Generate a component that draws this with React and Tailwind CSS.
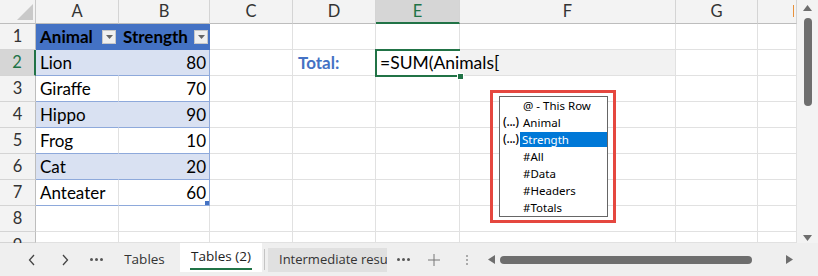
import React from "react";

const colW = ["w-[83px]", "w-[91px]", "w-[83px]", "w-[83px]", "w-[84px]", "w-[216px]", "w-[82px]", "w-[39px]"];
const letters = ["A", "B", "C", "D", "E", "F", "G", "H"];

const data = [
  ["Lion", "80"],
  ["Giraffe", "70"],
  ["Hippo", "90"],
  ["Frog", "10"],
  ["Cat", "20"],
  ["Anteater", "60"],
];

function HeaderRow() {
  return (
    <div className="flex h-[24px]">
      <div className="relative w-[36px] shrink-0 bg-[#f3f3f3] border-r border-b border-r-[#c8c8c8] border-b-[#bdbdbd]">
        <svg className="absolute left-[17px] top-[4px]" width="16" height="16">
          <polygon points="16,0 16,16 0,16" fill="#c9c9c9" />
        </svg>
      </div>
      {letters.map((l, i) => (
        <div
          key={l}
          className={
            colW[i] +
            " relative shrink-0 text-center text-[16.5px] leading-[23px] border-r border-r-[#d4d4d4] " +
            (l === "E"
              ? "bg-[#d6d6d6] text-[#217346] border-b-2 border-b-[#217346]"
              : "bg-[#f3f3f3] text-[#333333] border-b border-b-[#bdbdbd]")
          }
        >
          {l === "H" ? "" : l}
          {l === "H" && <div className="absolute right-[2px] top-[5px] w-px h-[12px] bg-[#e8913a]" />}
        </div>
      ))}
    </div>
  );
}

function RowHead({ n, active, short }) {
  return (
    <div
      className={
        "w-[36px] shrink-0 text-center text-[16.5px] border-b border-b-[#d4d4d4] " +
        (short ? "leading-[26px] " : "leading-[25px] ") +
        (active
          ? "bg-[#d6d6d6] text-[#217346] border-r-2 border-r-[#217346]"
          : "bg-[#f3f3f3] text-[#333333] border-r border-r-[#bdbdbd]")
      }
    >
      {n}
    </div>
  );
}

function Plain({ i, className = "", children }) {
  return (
    <div className={colW[i] + " shrink-0 border-r border-b border-[#e1e1e1] " + className}>{children}</div>
  );
}

function TableRow({ r, idx }) {
  const band = idx % 2 === 0;
  const isRow2 = idx === 0;
  return (
    <div className="flex h-[26px]">
      <RowHead n={idx + 2} active={isRow2} />
      <div
        className={
          "w-[83px] shrink-0 pl-[4px] leading-[25px] border-b border-b-[#8ea9db] border-r " +
          (band ? "bg-[#d9e1f2] border-r-[#d9e1f2]" : "bg-white border-r-[#e1e1e1]")
        }
      >
        {r[0]}
      </div>
      <div
        className={
          "relative w-[91px] shrink-0 pr-[3px] text-right leading-[25px] border-b border-b-[#8ea9db] border-r border-r-[#8ea9db] " +
          (band ? "bg-[#d9e1f2]" : "bg-white")
        }
      >
        {r[1]}
        {idx === 5 && <div className="absolute right-0 bottom-0 w-[4px] h-[4px] bg-[#4472c4]" />}
      </div>
      <Plain i={2} />
      {isRow2 ? (
        <Plain i={3} className="pl-[5px] leading-[25px] font-bold text-[#4472c4]">
          Total:
        </Plain>
      ) : (
        <Plain i={3} />
      )}
      {isRow2 ? (
        <div className="relative z-10 w-[84px] shrink-0 bg-white">
          <div className="absolute left-[-1px] top-[-1px] w-[85px] h-[28px] border-l-2 border-t-2 border-b-2 border-[#217346]" />
          <div className="absolute left-[81px] top-[23px] w-[7px] h-[7px] bg-[#217346] border border-white" />
          <div className="absolute left-[4px] top-0 leading-[25px] whitespace-nowrap text-[17.5px] text-black">
            =SUM(Animals[
          </div>
        </div>
      ) : (
        <Plain i={4} />
      )}
      <Plain i={5} className={isRow2 ? "bg-[#f2f2f2]" : ""} />
      <Plain i={6} />
      <Plain i={7} />
    </div>
  );
}

function EmptyRow({ n, short }) {
  return (
    <div className={"flex " + (short ? "h-[11px] overflow-hidden" : "h-[26px]")}>
      <RowHead n={n} short={short} />
      {letters.map((l, i) => (
        <Plain key={l} i={i} />
      ))}
    </div>
  );
}

function Popup() {
  const items = ["@ - This Row", "Animal", "Strength", "#All", "#Data", "#Headers", "#Totals"];
  return (
    <>
      <div className="absolute left-[490px] top-[90px] w-[126px] h-[133px] border-[3px] border-[#e5473f] z-20" />
      <div className="absolute left-[499px] top-[96px] w-[109px] h-[121px] border border-[#666666] bg-white z-30 font-[family-name:'Noto_Sans',sans-serif] text-[11.5px] text-black">
        {items.map((t, i) => (
          <div key={t} className="relative h-[17px] leading-[17px]">
            {(i === 1 || i === 2) && (
              <span className="absolute left-[3px] top-[-1px] text-[12px] font-medium tracking-[-0.3px]">(...)</span>
            )}
            {i === 2 ? (
              <div className="absolute left-[20px] right-0 top-px h-[15px] bg-[#0078d7] text-white pl-[2px] leading-[15px]">
                {t}
              </div>
            ) : (
              <span className="absolute left-[23px] top-0">{t}</span>
            )}
          </div>
        ))}
      </div>
    </>
  );
}

function Dropdown({ left }) {
  return (
    <div
      className={
        "absolute top-[6px] w-[14px] h-[14px] bg-[#f0f0f0] border border-[#c8c8c8] flex items-center justify-center " + left
      }
    >
      <svg width="7" height="4">
        <polygon points="0,0 7,0 3.5,4" fill="#666666" />
      </svg>
    </div>
  );
}

function Row1() {
  return (
    <div className="flex h-[26px]">
      <RowHead n={1} />
      <div className="relative w-[83px] shrink-0 pl-[4px] leading-[25px] font-bold bg-[#4472c4] border-r border-b border-[#4472c4] text-black">
        Animal
        <Dropdown left="left-[66px]" />
      </div>
      <div className="relative w-[91px] shrink-0 pl-[4px] leading-[25px] font-bold bg-[#4472c4] border-r border-b border-[#4472c4] text-black">
        Strength
        <Dropdown left="left-[75px]" />
      </div>
      {letters.slice(2).map((l, i) => (
        <Plain key={l} i={i + 2} />
      ))}
    </div>
  );
}

function Dots() {
  return (
    <div className="flex gap-[2px]">
      <div className="w-[3px] h-[3px] rounded-full bg-[#555]" />
      <div className="w-[3px] h-[3px] rounded-full bg-[#555]" />
      <div className="w-[3px] h-[3px] rounded-full bg-[#555]" />
    </div>
  );
}

function TabBar() {
  return (
    <div className="flex h-[33px] bg-[#efefef] items-stretch font-[family-name:'Open_Sans',sans-serif] text-[13.5px] text-[#333]">
      <div className="ml-[22px] w-[20px] flex items-center justify-center">
        <svg width="8" height="12">
          <polyline points="6,1 1.5,6 6,11" fill="none" stroke="#444" strokeWidth="1.3" />
        </svg>
      </div>
      <div className="ml-[13px] w-[20px] flex items-center justify-center">
        <svg width="8" height="12">
          <polyline points="2,1 6.5,6 2,11" fill="none" stroke="#444" strokeWidth="1.3" />
        </svg>
      </div>
      <div className="ml-[11px] w-[20px] flex items-center justify-center">
        <Dots />
      </div>
      <div className="ml-[10px] w-[57px] flex items-center justify-center">Tables</div>
      <div className="ml-[7px] w-[82px] h-[29px] bg-white flex flex-col items-center">
        <div className="mt-[3px] leading-[20px] font-medium text-[#222]">Tables (2)</div>
        <div className="mt-[2px] w-[62px] h-[2px] bg-[#217346]" />
      </div>
      <div className="ml-[2px] w-px my-[6px] bg-[#c4c4c4]" />
      <div className="ml-[3px] w-[119px] mt-[5px] mb-[4px] bg-[#e0e0e0] pl-[11px] flex items-center whitespace-nowrap overflow-hidden text-[13px]">
        Intermediate resu
      </div>
      <div className="ml-[6px] w-[20px] flex items-center justify-center">
        <Dots />
      </div>
      <div className="ml-[11px] w-[20px] flex items-center justify-center">
        <svg width="14" height="14">
          <line x1="7" y1="1" x2="7" y2="13" stroke="#777" strokeWidth="1" />
          <line x1="1" y1="7" x2="13" y2="7" stroke="#777" strokeWidth="1" />
        </svg>
      </div>
      <div className="ml-[13px] w-[20px] flex items-center justify-center">
        <div className="flex flex-col gap-[2px]">
          <div className="w-[2px] h-[2px] bg-[#aaa]" />
          <div className="w-[2px] h-[2px] bg-[#aaa]" />
          <div className="w-[2px] h-[2px] bg-[#aaa]" />
        </div>
      </div>
      <div className="ml-[8px] w-[12px] flex items-center justify-center">
        <svg width="7" height="9">
          <polygon points="7,0 7,9 0,4.5" fill="#6e6e6e" />
        </svg>
      </div>
      <div className="ml-[3px] w-[252px] flex items-center">
        <div className="w-full h-[8px] rounded-full bg-[#6e6e6e]" />
      </div>
      <div className="ml-[31px] w-[12px] flex items-center justify-center">
        <svg width="7" height="9">
          <polygon points="0,0 0,9 7,4.5" fill="#6e6e6e" />
        </svg>
      </div>
    </div>
  );
}

export default function App() {
  return (
    <div className="w-[818px] h-[276px] overflow-hidden bg-white font-[family-name:Lato,sans-serif] text-[17px] text-black">
      <div className="relative flex h-[243px]">
        <div className="w-[797px] overflow-hidden">
          <HeaderRow />
          <Row1 />
          {data.map((r, idx) => (
            <TableRow key={idx} r={r} idx={idx} />
          ))}
          <EmptyRow n={8} />
          <EmptyRow n={9} short />
        </div>
        <div className="relative w-[21px] bg-[#f3f3f3] flex flex-col items-center">
          <svg className="mt-[5px]" width="9" height="6">
            <polygon points="4.5,0 9,6 0,6" fill="#6e6e6e" />
          </svg>
          <div className="mt-[7px] w-[8px] h-[88px] rounded-full bg-[#6e6e6e]" />
          <svg className="mt-auto mb-[2px]" width="9" height="6">
            <polygon points="0,0 9,0 4.5,6" fill="#6e6e6e" />
          </svg>
        </div>
        <Popup />
      </div>
      <TabBar />
    </div>
  );
}
